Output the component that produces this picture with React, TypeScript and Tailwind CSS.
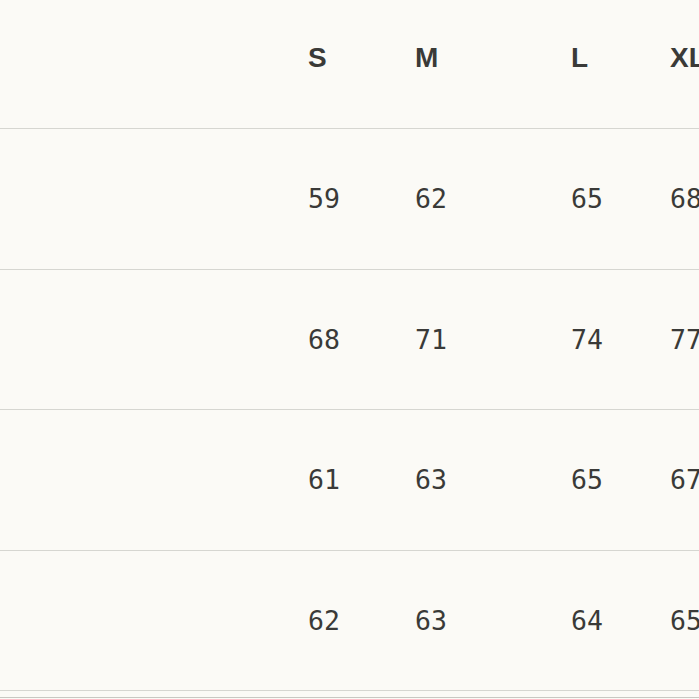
import React from 'react';

const sizes = ['S', 'M', 'L', 'XL'];
const rows = [
  ['59', '62', '65', '68'],
  ['68', '71', '74', '77'],
  ['61', '63', '65', '67'],
  ['62', '63', '64', '65'],
];
const heights = ['h-[141px]', 'h-[140px]', 'h-[141px]', 'h-[140px]'];

const Cols: React.FC<{ cells: string[]; bold?: boolean }> = ({ cells, bold }) => (
  <div className="grid h-full grid-cols-[308px_107px_156px_99px_1fr] items-center">
    <div />
    {cells.map((c, i) => (
      <div
        key={i}
        className={
          bold
            ? 'font-bold text-[28px] font-["Liberation_Sans",Arial,sans-serif]'
            : 'text-[26.5px] font-["DejaVu_Sans_Mono",monospace]'
        }
      >
        {c}
      </div>
    ))}
  </div>
);

const App: React.FC = () => {
  return (
    <div className="h-[699px] w-[699px] overflow-hidden bg-[#fbfaf6] text-[#3a3a38]">
      <div className="-mt-[13px] h-[142px] border-b border-[#d6d6d1]">
        <Cols cells={sizes} bold />
      </div>
      {rows.map((r, i) => (
        <div key={i} className={`${heights[i]} border-b border-[#d6d6d1]`}>
          <Cols cells={r} />
        </div>
      ))}
      <div className="mt-[6px] border-t border-[#c8c8c2]" />
    </div>
  );
};

export default App;
